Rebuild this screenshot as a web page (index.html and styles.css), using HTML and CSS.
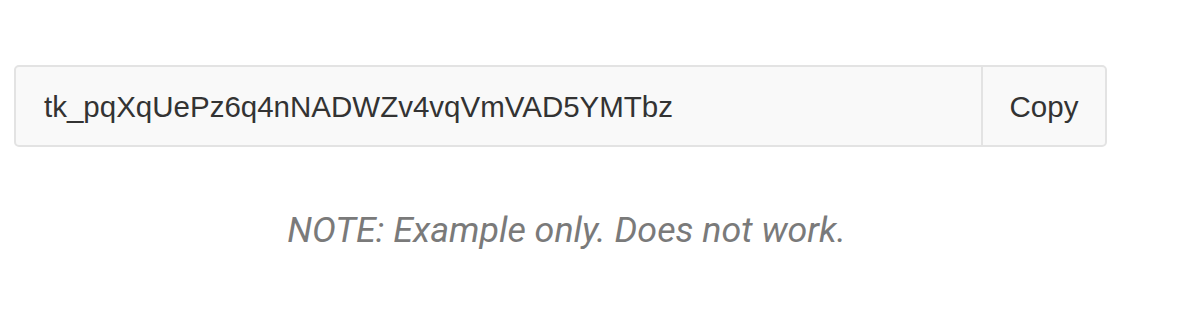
FILE: index.html
```html
<!DOCTYPE html>
<html>
<head>
<meta charset="utf-8">
<link rel="stylesheet" href="styles.css">
</head>
<body>
<div class="wrap">
  <div class="field">
    <div class="token">tk_pqXqUePz6q4nNADWZv4vqVmVAD5YMTbz</div>
    <div class="copy">Copy</div>
  </div>
  <p class="note">NOTE: Example only. Does not work.</p>
</div>
</body>
</html>
```
FILE: styles.css
```css
html, body { margin: 0; padding: 0; background: #fff; }
.wrap { width: 1093px; margin-left: 14px; padding-top: 65px; }
.field {
  display: flex;
  height: 78px;
  border: 2px solid #e3e3e3;
  border-radius: 5px;
  background: #f9f9f9;
  font-family: "Liberation Sans", Arial, sans-serif;
  color: #333;
}
.token {
  flex: 1;
  display: flex;
  align-items: center;
  padding-left: 28px;
  padding-top: 2px;
  font-size: 29.5px;
}
.copy {
  width: 122px;
  border-left: 2px solid #e3e3e3;
  display: flex;
  align-items: center;
  justify-content: center;
  padding-top: 2px;
  font-size: 29.5px;
}
.note {
  margin: 0;
  padding-top: 62px;
  padding-left: 12px;
  text-align: center;
  font-family: Roboto, sans-serif;
  font-style: italic;
  font-size: 35.8px;
  color: #7a7a7a;
}
```
